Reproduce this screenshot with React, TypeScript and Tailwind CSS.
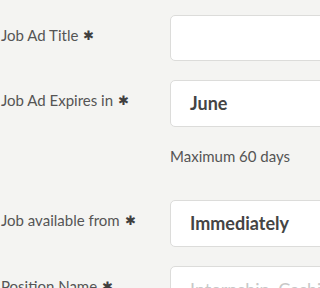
import React from "react";

const font = { fontFamily: "Lato, 'Noto Sans', sans-serif" };

function Star() {
  return <span className="ml-[5px] text-[13px] text-[#3f3f3f] relative top-[-1px]">✱</span>;
}

function Label({ children }: { children: React.ReactNode }) {
  return (
    <div className="w-[170px] shrink-0 pl-[1px] pb-[6px] text-[15px] text-[#555] leading-[20px] whitespace-nowrap">
      {children}
      <Star />
    </div>
  );
}

export default function App() {
  return (
    <div className="w-full h-screen overflow-hidden bg-[#f4f4f2]" style={font}>
      <div className="flex flex-col w-[520px] pt-[15px]">
        <div className="flex items-center">
          <Label>Job Ad Title</Label>
          <div className="h-[46px] w-[330px] bg-white border border-[#dcdcda] rounded-[5px]" />
        </div>
        <div className="flex items-center mt-[19px]">
          <Label>Job Ad Expires in</Label>
          <div className="h-[47px] w-[330px] bg-white border border-[#dcdcda] rounded-[5px] flex items-center pl-[19px] text-[18px] font-bold text-[#444]">
            June
          </div>
        </div>
        <div className="flex mt-[19px]">
          <div className="w-[170px] shrink-0" />
          <div className="text-[15px] leading-[20px] text-[#555] whitespace-nowrap">Maximum 60 days</div>
        </div>
        <div className="flex items-center mt-[34px]">
          <Label>Job available from</Label>
          <div className="h-[47px] w-[330px] bg-white border border-[#dcdcda] rounded-[5px] flex items-center pl-[19px] text-[18px] font-bold text-[#444] whitespace-nowrap">
            Immediately
          </div>
        </div>
        <div className="flex items-center mt-[19px]">
          <Label>Position Name</Label>
          <div className="h-[47px] w-[330px] bg-white border border-[#dcdcda] rounded-[5px] flex items-center pl-[19px] text-[18px] text-[#c8c8c8] whitespace-nowrap">
            Internship, Cashier
          </div>
        </div>
      </div>
    </div>
  );
}
